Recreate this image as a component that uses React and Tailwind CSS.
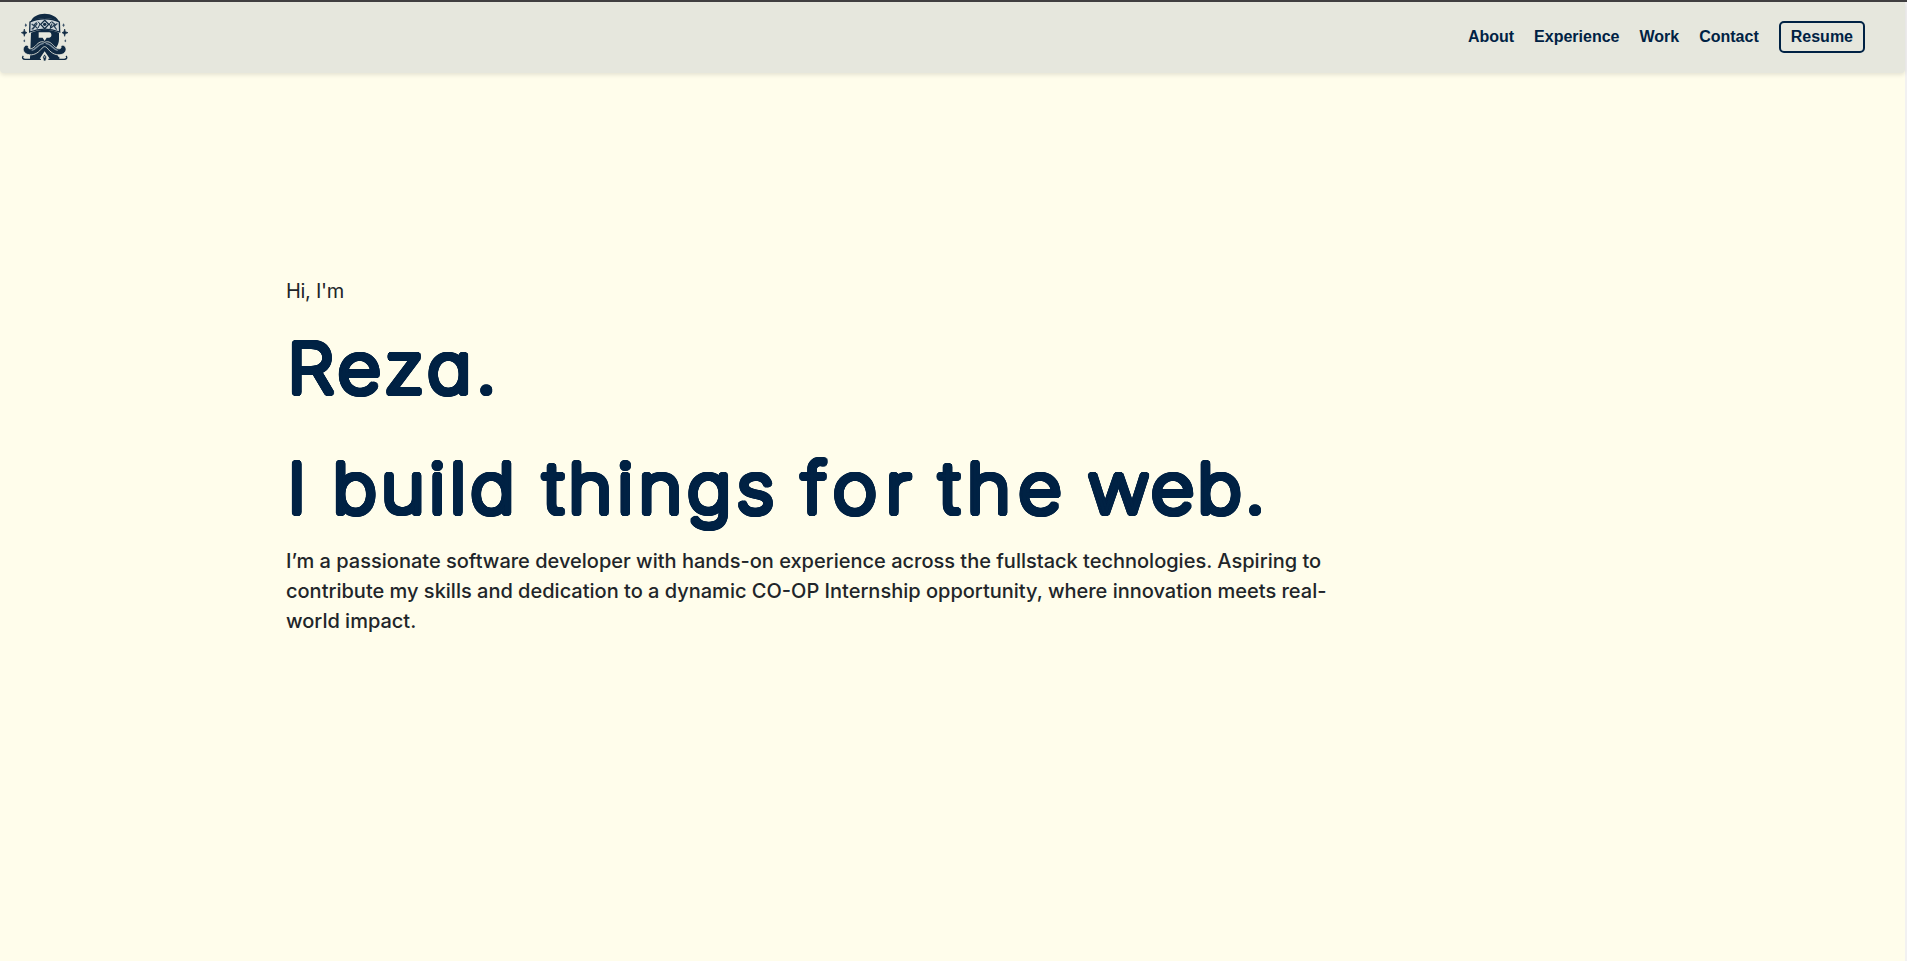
const navLinks = ["About", "Experience", "Work", "Contact"];

// Rings of hard shadows thicken thin strokes and round off their ends.
const ring = (rx, ry, steps) =>
  Array.from({ length: steps }, (_, i) => {
    const angle = (i / steps) * Math.PI * 2;
    return `${(Math.cos(angle) * rx).toFixed(2)}px ${(Math.sin(angle) * ry).toFixed(2)}px 0 #002244`;
  });
const roundedStrokes = [...ring(2.75, 3.15, 24), ...ring(1.4, 1.6, 8)].join(", ");

function Logo() {
  return (
    <svg className="h-[50px] w-[50px]" viewBox="60 36 150 150" fill="none" aria-hidden="true">
      {/* cap */}
      <path d="M92 66C96 50 115 41 134 41s38 9 44 25c-12-8-28-11-43-11s-31 3-43 11Z" fill="#102a43" />
      {/* head and R-shaped face */}
      <path d="M93 98c27-12 57-12 84 0v20c0 10-4 20-11 28l12 34h-26l-18-26-18 26H90Z" fill="#102a43" />
      <path d="M116 97h32c8 0 9 16 0 16h-8l-6 10-6-10h-12Z" fill="#e6e7dd" />
      {/* headband */}
      <path d="M90 66c26-13 62-13 88 0l1 30c-28-11-62-11-90 0Z" fill="#cfd6da" stroke="#102a43" strokeWidth="4" />
      <path d="m95 72 9 7-9 9m15-21-8 8 11 11m-15 2 14-18m43-5 9 7-10 12m18-13-11 6 9 12m-14-18-6 16m14-9 8-8" stroke="#294158" strokeWidth="3.5" />
      <path d="m134 61 12 12-12 13-12-13Z" stroke="#102a43" strokeWidth="4" />
      <circle cx="134" cy="73" r="5" fill="#102a43" />
      <path d="M114 65l6 7-6 12m40-19-6 7 6 12" stroke="#102a43" strokeWidth="3" />
      {/* side ornaments */}
      <path d="m73 87 2 8 6 3-6 3-2 8-2-8-7-3 7-3Zm121 0 2 8 8 3-8 3-2 8-2-8-6-3 6-3Z" fill="#102a43" stroke="#102a43" strokeWidth="2" />
      <path d="m77 70 4 6-4 5-3-5Zm114 0 3 6-3 5-4-5ZM73 118l3 5-3 4-3-4Zm123 0 3 5-3 4-3-4Z" fill="#40566b" />
      {/* moustache */}
      <path d="M134 127c-14-6-22 5-29 12-8 8-17 10-20 4 2-7-6-10-11-5-8 8-4 21 8 25 17 5 31-3 41-15 5-6 8-8 11-8s6 2 11 8c10 12 24 20 41 15 12-4 16-17 8-25-5-5-13-2-11 5-3 6-12 4-20-4-7-7-15-18-29-12Z" fill="#102a43" stroke="#e6e7dd" strokeWidth="2.5" />
      <path d="M131 131c-15-3-22 18-36 20m42-20c15-3 22 18 36 20" stroke="#8293a2" strokeWidth="4" />
      {/* base */}
      <path d="M70 168c-5 4-2 10 5 10h48m75-10c5 4 2 10-5 10h-48" stroke="#102a43" strokeWidth="4" />
      <path d="M90 170h32l-4 8H90Zm56 0h32v8h-28Z" fill="#102a43" />
      <path d="m134 162 6 9-3 12h-6l-3-12Z" fill="#102a43" stroke="#e6e7dd" strokeWidth="2" />
      <circle cx="134" cy="171" r="2" fill="#e6e7dd" />
    </svg>
  );
}

export default function App() {
  return (
    <div className="flex h-[961px] flex-col overflow-hidden border-t-2 border-[#403f40] bg-[#fffdeb] font-['Liberation_Sans',Arial,sans-serif]">
      <div className="flex flex-1 border-r-2 border-[#f2f1f1]">
        <div className="flex flex-1 flex-col">
          <header className="flex h-[71px] items-center justify-between rounded-b-[4px] bg-[#e6e7dd] pr-10 pb-[2px] pl-5 shadow-[0_2px_4px_rgba(0,0,0,0.1)]">
            <Logo />
            <nav className="flex items-center gap-5 text-base font-bold text-[#002244]">
              {navLinks.map((label) => (
                <a key={label} href="#" className="leading-6">{label}</a>
              ))}
              <a href="#" className="flex h-8 items-center rounded-[5px] border-2 border-[#002244] px-[10px]">Resume</a>
            </nav>
          </header>
          <main className="flex flex-col pt-[203px] pl-[286px] font-['Inter',sans-serif] text-xl leading-[30px] text-[#212529]">
            <p className="tracking-[-0.3px]">Hi, I'm</p>
            <h1
              className="mt-[2px] -mb-[2px] ml-[1px] w-[1000px] origin-left scale-x-110 text-[69px] leading-[120px] font-extralight whitespace-pre text-[#002244] [font-feature-settings:'cv11']"
              style={{ textShadow: roundedStrokes }}
            >
              <span className="block tracking-[3.5px]">Reza.</span>
              <span className="flex">
                <span className="w-[41px]">I </span>
                <span className="w-[192px] tracking-[3.3px]">build </span>
                <span className="w-[235px] tracking-[3.9px]">things </span>
                <span className="w-[125px] tracking-[7.4px]">for </span>
                <span className="w-[135px] tracking-[6.3px]">the </span>
                <span className="tracking-[2.4px]">web.</span>
              </span>
            </h1>
            <p className="w-[1048px] font-medium">
              I’m a passionate software developer with hands-on experience across the fullstack technologies. Aspiring to contribute my skills and dedication to a dynamic CO-OP Internship opportunity, where innovation meets real-world impact.
            </p>
          </main>
        </div>
      </div>
    </div>
  );
}
